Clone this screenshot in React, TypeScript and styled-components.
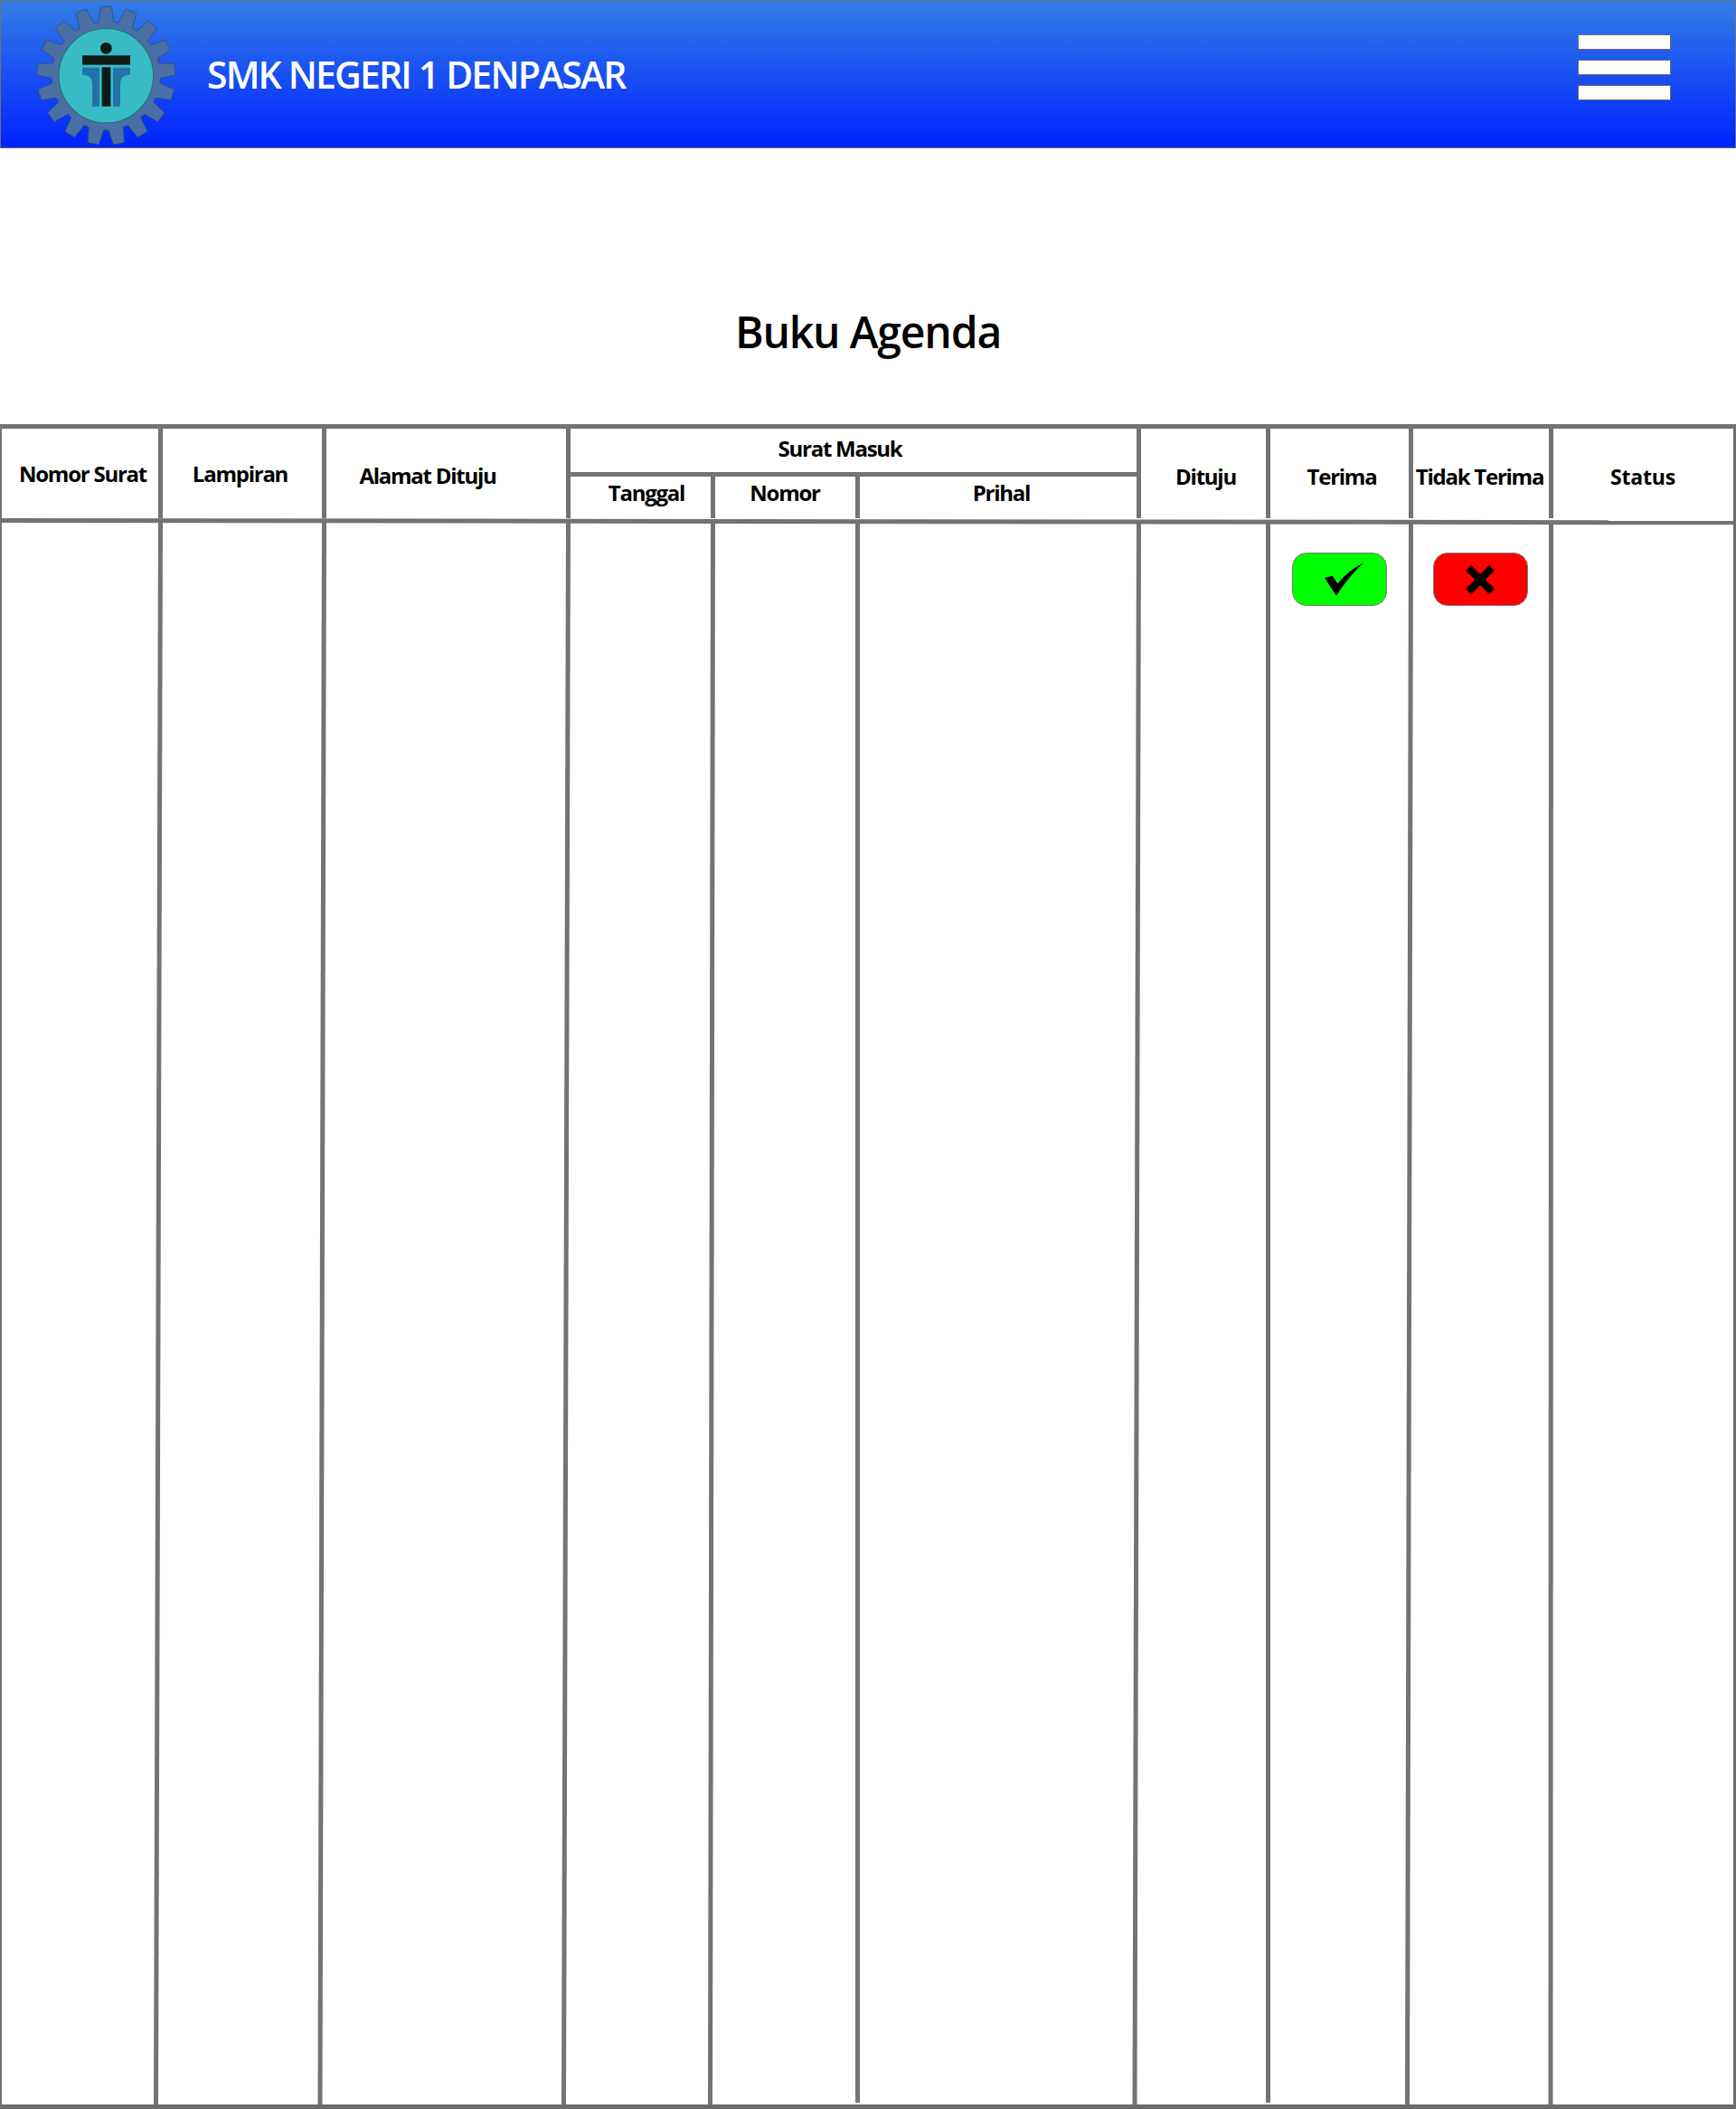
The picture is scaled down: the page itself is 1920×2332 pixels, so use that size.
import React from "react";
import styled, { createGlobalStyle } from "styled-components";

const LINE = "#737373";
const COLUMNS = "178px 181px 270px 160px 160px 311px 143px 158px 155px 199px";

const Global = createGlobalStyle`
  html, body { margin: 0; padding: 0; background: #fff; }
  * { box-sizing: border-box; }
  body { font-family: "Open Sans", "Noto Sans", "Liberation Sans", sans-serif; color: #000; }
`;

const Page = styled.div`
  width: 1920px;
  height: 2332px;
  overflow: hidden;
`;

const TopBar = styled.header`
  height: 164px;
  display: flex;
  align-items: center;
  justify-content: space-between;
  padding: 0 71px 0 29px;
  border: 1px solid #707070;
  background: linear-gradient(180deg, #327de6 0%, #0023ff 100%);
`;

const Brand = styled.div`
  display: flex;
  align-items: center;
  gap: 19px;
`;

const Logo = styled.svg`
  width: 180px;
  height: 162px;
  display: block;
  overflow: visible;
`;

const SchoolName = styled.div`
  color: #fff;
  font-size: 41px;
  font-weight: 600;
  letter-spacing: -1.85px;
  line-height: 56px;
`;

const Menu = styled.div`
  align-self: flex-start;
  margin-top: 37px;
  display: flex;
  flex-direction: column;
  gap: 11px;
`;

const MenuBar = styled.span`
  display: block;
  width: 103px;
  height: 17px;
  background: #fff;
  border: 1px solid #6b6b6b;
`;

const Heading = styled.h1`
  margin: 0;
  height: 305px;
  padding-top: 173px;
  text-align: center;
  font-size: 48px;
  font-weight: 600;
  line-height: 60px;
  letter-spacing: -1.15px;
`;

const Table = styled.section`
  height: 1863px;
  border-top: 5px solid ${LINE};
  border-left: 2px solid ${LINE};
  border-right: 3px solid #6e6e6e;
  border-bottom: 5px solid #6b6b6b;
`;

const HeaderGrid = styled.div`
  display: grid;
  grid-template-columns: ${COLUMNS};
  grid-template-rows: 53px 46px;
  height: 99px;
`;

const HeaderCell = styled.div<{ $last?: boolean }>`
  grid-row: 1 / 3;
  display: flex;
  align-items: center;
  justify-content: center;
  white-space: nowrap;
  border-right: ${(p) => (p.$last ? "none" : `5px solid ${LINE}`)};
`;

const GroupCell = styled(HeaderCell)`
  grid-row: 1;
  grid-column: 4 / 7;
  border-bottom: 5px solid ${LINE};
`;

const SubCell = styled(HeaderCell)`
  grid-row: 2;
`;

const Label = styled.span<{ $dx?: number; $dy?: number; $small?: boolean }>`
  font-size: ${(p) => (p.$small ? 23 : 24)}px;
  font-weight: 700;
  letter-spacing: ${(p) => (p.$small ? -0.2 : -1.25)}px;
  line-height: 32px;
  margin-left: ${(p) => (p.$dx ?? 0) * 2}px;
  margin-top: ${(p) => (p.$dy ?? 0) * 2}px;
`;

const RowRule = styled.div`
  height: 5px;
  background: ${LINE};
  transform: skewY(0.07deg);
  transform-origin: left top;
`;

const Body = styled.div`
  display: grid;
  grid-template-columns: ${COLUMNS};
  height: 1749px;
`;

const BodyColumn = styled.div`
  display: flex;
  height: 100%;
`;

const Slot = styled.div`
  flex: 1;
  display: flex;
  justify-content: center;
  align-items: flex-start;
  padding-top: 33px;
`;

const Rule = styled.div<{ $drop: number; $short?: boolean }>`
  flex: none;
  width: 5px;
  height: ${(p) => (p.$short ? "calc(100% - 2px)" : "100%")};
  background: ${LINE};
  transform: skewX(${(p) => (-Math.atan(p.$drop / 1749) * 180) / Math.PI}deg);
  transform-origin: left top;
`;

const ActionButton = styled.button<{ $tone: string; $nudge?: number }>`
  width: 105px;
  height: 59px;
  padding: 0;
  margin-left: ${(p) => p.$nudge ?? 0}px;
  display: flex;
  align-items: center;
  justify-content: center;
  background: ${(p) => p.$tone};
  border: 1px solid #7a7a7a;
  border-radius: 16px;
`;

const ToolIcon = styled.svg<{ $shift?: number }>`
  display: block;
  margin-left: ${(p) => p.$shift ?? 0}px;
`;

const SCHOOL_BLUE = "#2473a6";

function gearPoints(): string {
  const teeth = 17;
  const cx = 262;
  const cy = 248;
  const pts: string[] = [];
  const at = (deg: number, r: number) => {
    const a = ((deg - 90) * Math.PI) / 180;
    return `${(cx + r * Math.cos(a)).toFixed(1)},${(cy + r * Math.sin(a)).toFixed(1)}`;
  };
  for (let i = 0; i < teeth; i++) {
    const c = (i * 360) / teeth;
    pts.push(at(c - 8, 180), at(c - 4.6, 230), at(c + 4.6, 230), at(c + 8, 180));
  }
  return pts.join(" ");
}

const SchoolLogo = () => (
  <Logo viewBox="0 0 540 486" aria-label="Logo">
    <rect x="88" y="190" width="30" height="18" fill="#44489f" />
    <rect x="410" y="190" width="30" height="18" fill="#44489f" />
    <rect x="250" y="405" width="26" height="26" fill="#44489f" />
    <polygon points={gearPoints()} fill="#4a6fa5" stroke="#2f4c80" strokeWidth="2.5" strokeLinejoin="round" />
    <circle cx="262" cy="248" r="157" fill="#38bbc4" stroke="#2a7378" strokeWidth="4" />
    <circle cx="262" cy="157" r="19" fill="#0d1a15" />
    <rect x="183" y="181" width="159" height="31" fill="#0d1a15" />
    <rect x="248" y="220" width="29" height="130" fill="#0d1a15" />
    <path d="M183 221H240V350H216V275Q216 245 183 245Z" fill={SCHOOL_BLUE} />
    <path d="M342 221H285V350H309V275Q309 245 342 245Z" fill={SCHOOL_BLUE} />
  </Logo>
);

const columnRules = [
  { drop: 5 },
  { drop: 4.5 },
  { drop: 5 },
  { drop: 3 },
  { drop: 0, short: true },
  { drop: 4.5 },
  { drop: 0, short: true },
  { drop: 4 },
  { drop: 0.5 },
];

export default function App() {
  return (
    <Page>
      <Global />
      <TopBar>
        <Brand>
          <SchoolLogo />
          <SchoolName>SMK NEGERI 1 DENPASAR</SchoolName>
        </Brand>
        <Menu>
          <MenuBar />
          <MenuBar />
          <MenuBar />
        </Menu>
      </TopBar>
      <Heading>Buku Agenda</Heading>
      <Table>
        <HeaderGrid>
          <HeaderCell><Label $dx={3} $dy={0.5}>Nomor Surat</Label></HeaderCell>
          <HeaderCell><Label $dx={-2.5} $dy={0.5}>Lampiran</Label></HeaderCell>
          <HeaderCell><Label $dx={-20.5} $dy={2}>Alamat Dituju</Label></HeaderCell>
          <GroupCell><Label $dx={-15} $dy={-2.5}>Surat Masuk</Label></GroupCell>
          <SubCell><Label $dx={6.5} $dy={-5}>Tanggal</Label></SubCell>
          <SubCell><Label $dx={-0.5} $dy={-5}>Nomor</Label></SubCell>
          <SubCell><Label $dx={3.5} $dy={-5}>Prihal</Label></SubCell>
          <HeaderCell><Label $dx={2.5} $dy={3.5}>Dituju</Label></HeaderCell>
          <HeaderCell><Label $dx={2.5} $dy={3.5}>Terima</Label></HeaderCell>
          <HeaderCell><Label $dx={-1.5} $dy={3.5}>Tidak Terima</Label></HeaderCell>
          <HeaderCell $last><Label $small $dx={-0.5} $dy={3.5}>Status</Label></HeaderCell>
        </HeaderGrid>
        <RowRule />
        <Body>
          {columnRules.map((rule, i) => (
            <BodyColumn key={i}>
              <Slot>
                {i === 7 && (
                  <ActionButton $tone="#00ff00" aria-label="Terima">
                    <ToolIcon $shift={10} width="44" height="37" viewBox="0 0 44 37">
                      <path d="M0 17L8.7 14.7L14.3 23.3Q26 9 43.4 0Q26 16 13 36.7Z" fill="#000" />
                    </ToolIcon>
                  </ActionButton>
                )}
                {i === 8 && (
                  <ActionButton $tone="#ff0000" $nudge={-2} aria-label="Tidak Terima">
                    <ToolIcon width="32" height="32" viewBox="0 0 32 32">
                      <path d="M0 6L6 0L16 10L26 0L32 6L21.5 16L32 26L26 32L16 22L6 32L0 26L10.5 16Z" fill="#000" />
                    </ToolIcon>
                  </ActionButton>
                )}
              </Slot>
              <Rule $drop={rule.drop} $short={rule.short} />
            </BodyColumn>
          ))}
          <BodyColumn />
        </Body>
      </Table>
    </Page>
  );
}
